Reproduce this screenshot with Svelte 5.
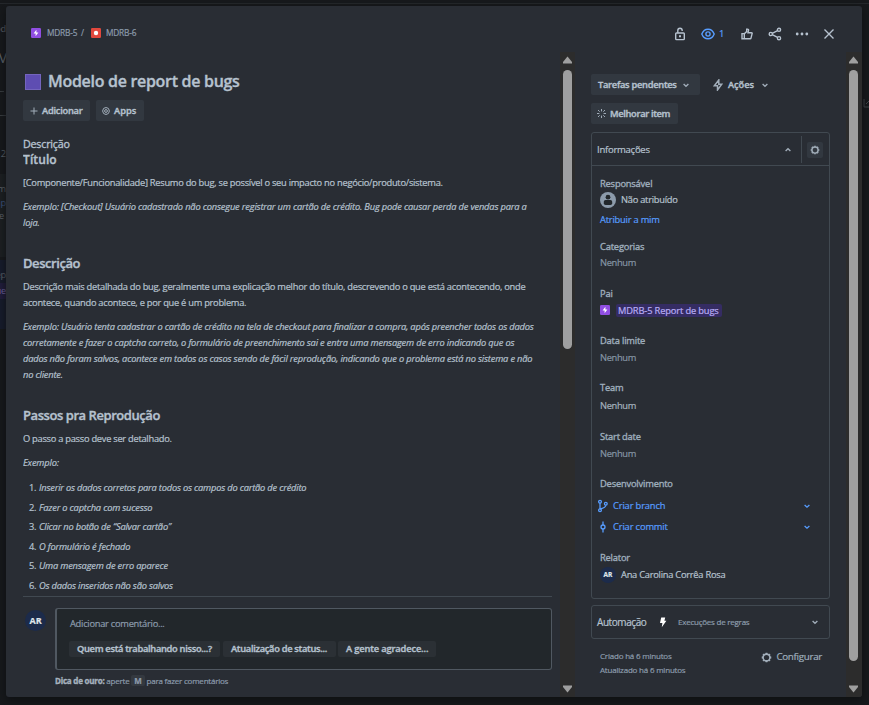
<script>
  const steps = [
    'Inserir os dados corretos para todos os campos do cartão de crédito',
    'Fazer o captcha com sucesso',
    'Clicar no botão de “Salvar cartão”',
    'O formulário é fechado',
    'Uma mensagem de erro aparece',
    'Os dados inseridos não são salvos'
  ];
  const replies = ['Quem está trabalhando nisso...?', 'Atualização de status...', 'A gente agradece...'];
</script>

{#snippet chevron(up = false)}
  <svg class="chev" class:up width="8" height="8" viewBox="0 0 8 8"><path d="M1.6 3 4 5.2 6.4 3" /></svg>
{/snippet}
{#snippet epic()}
  <svg width="10" height="10" viewBox="0 0 10 10"><rect width="10" height="10" rx="1.3" fill="#904ee2" /><path d="M5.4 1.8 2.6 5.4h2v2.8l2.8-3.6h-2z" fill="#fff" /></svg>
{/snippet}
{#snippet gear(size = 12)}
  <svg class="gear" width={size} height={size} viewBox="0 0 12 12"><circle cx="6" cy="6" r="3.7" stroke-width="1.7" /><path stroke-width="2" d="M6 .8v1.4M6 9.8v1.4M.8 6h1.4M9.8 6h1.4M2.3 2.3l1 1M8.7 8.7l1 1M9.7 2.3l-1 1M3.3 8.7l-1 1" /></svg>
{/snippet}
{#snippet scrollbar(kind)}
  <div class="scrollbar {kind}">
    <svg width="9" height="8" viewBox="0 0 9 8"><path d="M4.5 .5 9 6v1.5H0V6z" /></svg>
    <div class="thumb"></div>
    <svg class="down" width="9" height="8" viewBox="0 0 9 8"><path d="M4.5 7.5 9 2V.5H0V2z" /></svg>
  </div>
{/snippet}

<div class="page">
  <div class="board left-edge">
    <span class="b1">od</span><span class="b2">V</span><i class="r1"></i><i class="r2"></i>
    <span class="b3">o 2</span><i class="card"></i><span class="b4">rm</span><span class="b5">mp</span><span class="b6">e</span>
    <i class="sel"></i><span class="b7">ep</span><span class="b8">ue</span>
  </div>
  <div class="board right-edge"><svg width="8" height="10" viewBox="0 0 8 10"><path d="M1 1v8h7M3 6l4-4" /></svg></div>

  <section class="modal">
    <header>
      <nav>{@render epic()}<span class="k1">MDRB-5</span><span class="slash">/</span>
        <svg width="10" height="10" viewBox="0 0 10 10"><rect width="10" height="10" rx="1.3" fill="#e2483d" /><circle cx="5" cy="5" r="2.2" fill="#fff" /></svg>
        <span class="k2">MDRB-6</span></nav>
      <div class="tools">
        <svg class="lock" width="12" height="14" viewBox="0 0 12 14"><rect x="1.7" y="6" width="8.6" height="6.6" rx=".8" /><path d="M3.8 6V3.5a2.2 2.2 0 0 1 4.4 0V4" /><path d="M6 8.3v2" stroke-width="2" /></svg>
        <svg class="eye" width="14" height="12" viewBox="0 0 14 12"><path d="M.8 6C2 3 4.4 1.2 7 1.2S12 3 13.2 6C12 9 9.6 10.8 7 10.8S2 9 .8 6z" /><circle cx="7" cy="6" r="2.1" /></svg>
        <span class="one">1</span>
        <svg class="like" width="12" height="12" viewBox="0 0 12 12"><path d="M1 5.6h2.3v5.2H1zM3.3 5.8 5.7 3.6V1.1h.9c.8 0 1.1.7.9 1.5l-.5 2.1h3.4c.6 0 .9.5.7 1l-1.1 4.4c-.1.5-.5.7-.9.7H3.3" /></svg>
        <svg class="share" width="14" height="14" viewBox="0 0 14 14"><circle cx="2.8" cy="7" r="1.6" /><circle cx="11" cy="2.8" r="1.6" /><circle cx="11" cy="11.2" r="1.6" /><path d="m4.3 6.3 5.2-2.7M4.3 7.7l5.2 2.7" /></svg>
        <svg class="dots" width="14" height="4" viewBox="0 0 14 4"><circle cx="2.2" cy="2" r="1.4" /><circle cx="7" cy="2" r="1.4" /><circle cx="11.8" cy="2" r="1.4" /></svg>
        <svg class="close" width="12" height="12" viewBox="0 0 12 12"><path d="m1.5 1.5 9 9m0-9-9 9" /></svg>
      </div>
    </header>

    <div class="columns">
      <main>
        <div class="content">
          <h1><i class="swatch"></i><span>Modelo de report de bugs</span></h1>
          <div class="actions">
            <button class="add"><svg width="8" height="8" viewBox="0 0 8 8"><path d="M4 .5v7M.5 4h7" /></svg><span>Adicionar</span></button>
            <button class="apps"><svg width="8" height="8" viewBox="0 0 8 8"><path d="m4 .5 2.4.9L7.4 4l-1 2.5L4 7.5l-2.4-1L.6 4l1-2.6z" /><circle cx="4" cy="4" r="1.4" /></svg><span>Apps</span></button>
          </div>
          <div class="label">Descrição</div>
          <h2 class="first">Título</h2>
          <p>[Componente/Funcionalidade] Resumo do bug, se possível o seu impacto no negócio/produto/sistema.</p>
          <p class="em">Exemplo: [Checkout] Usuário cadastrado não consegue registrar um cartão de crédito. Bug pode causar perda de vendas para a<br />loja.</p>
          <h2>Descrição</h2>
          <p>Descrição mais detalhada do bug, geralmente uma explicação melhor do título, descrevendo o que está acontecendo, onde<br />acontece, quando acontece, e por que é um problema.</p>
          <p class="em">Exemplo: Usuário tenta cadastrar o cartão de crédito na tela de checkout para finalizar a compra, após preencher todos os dados<br />corretamente e fazer o captcha correto, o formulário de preenchimento sai e entra uma mensagem de erro indicando que os<br />dados não foram salvos, acontece em todos os casos sendo de fácil reprodução, indicando que o problema está no sistema e não<br />no cliente.</p>
          <h2>Passos pra Reprodução</h2>
          <p>O passo a passo deve ser detalhado.</p>
          <p class="em">Exemplo:</p>
          <ol>
            {#each steps as step, i}<li><b>{i + 1}.</b><span>{step}</span></li>{/each}
          </ol>
        </div>
        <div class="comment">
          <div class="avatar big">AR</div>
          <div class="editor">
            <div class="box">
              <div class="ph">Adicionar comentário...</div>
              <div class="replies">{#each replies as r, i}<button class="r{i}">{r}</button>{/each}</div>
            </div>
            <div class="tip"><strong>Dica de ouro:</strong> <span>aperte</span> <kbd>M</kbd> <span>para fazer comentários</span></div>
          </div>
        </div>
      </main>
      {@render scrollbar('short')}

      <aside>
        <div class="status">
          <button class="todo"><span>Tarefas pendentes</span>{@render chevron()}</button>
          <button class="act"><svg width="10" height="12" viewBox="0 0 10 12"><path d="M5.8 1 1.3 6.8h3.2V11l4.3-5.8H5.8z" /></svg><span>Ações</span>{@render chevron()}</button>
        </div>
        <button class="improve"><svg width="9" height="9" viewBox="0 0 9 9"><path d="M4.5 0v2.4M4.5 6.6V9M0 4.5h2.4M6.6 4.5H9M1 1l1.7 1.7M6.3 6.3 8 8M8 1 6.3 2.7M2.7 6.3 1 8" /></svg><span>Melhorar item</span></button>

        <div class="panel">
          <div class="head"><span>Informações</span>{@render chevron(true)}<div class="cfg"><button>{@render gear(10)}</button></div></div>
          <div class="fields">
            <div class="name">Responsável</div>
            <div class="user"><svg width="16" height="16" viewBox="0 0 16 16"><circle cx="8" cy="8" r="8" fill="#8c9bab" /><circle cx="8" cy="5.2" r="2.4" fill="#22272b" /><rect x="3.8" y="8" width="8.4" height="5" rx="1.7" fill="#22272b" /></svg><span>Não atribuído</span></div>
            <div class="assign">Atribuir a mim</div>
            <div class="name cat">Categorias</div>
            <div class="none">Nenhum</div>
            <div class="name pai">Pai</div>
            <div class="parent">{@render epic()}<span>MDRB-5 Report de bugs</span></div>
            <div class="name due">Data limite</div>
            <div class="none n2">Nenhum</div>
            <div class="name team">Team</div>
            <div class="none light">Nenhum</div>
            <div class="name start">Start date</div>
            <div class="none n2">Nenhum</div>
            <div class="name dev">Desenvolvimento</div>
            <div class="git branch"><svg width="12" height="14" viewBox="0 0 12 14"><circle cx="3" cy="2.7" r="1.4" /><circle cx="3" cy="11.3" r="1.4" /><circle cx="8.8" cy="4.8" r="1.4" /><path d="M3 4.1v5.8M8.8 6.2C8.8 8.3 7 9 3 10" /></svg><span>Criar branch</span>{@render chevron()}</div>
            <div class="git"><svg width="12" height="14" viewBox="0 0 12 14"><circle cx="6" cy="7" r="2" /><path d="M6 1.5V5M6 9v3.5" /></svg><span>Criar commit</span>{@render chevron()}</div>
            <div class="name rel">Relator</div>
            <div class="user who"><div class="avatar">AR</div><span>Ana Carolina Corrêa Rosa</span></div>
          </div>
        </div>

        <div class="panel auto"><span class="at">Automação</span><svg width="8" height="11" viewBox="0 0 8 11"><path d="M2.2.5h4L5.4 3.8h2L2.8 10.3 3.4 6H1z" fill="#fff" /></svg><span class="runs">Execuções de regras</span>{@render chevron()}</div>
        <div class="foot"><div class="dates"><div>Criado há 6 minutos</div><div>Atualizado há 6 minutos</div></div><div class="conf">{@render gear(11)}<span>Configurar</span></div></div>
      </aside>
      {@render scrollbar('long')}
    </div>
  </section>
</div>

<style>
  :global(body) { background: #17191c; }
  * { box-sizing: border-box; }
  .page { position: relative; width: 869px; height: 705px; padding: 6px 0 0 6px; overflow: hidden; background: #17191c; box-shadow: inset 0 3px #17191c, inset 0 4px #25282c; font-family: 'Open Sans', 'Noto Sans', sans-serif; font-size: 9.3px; line-height: 16px; letter-spacing: -.2px; color: #b6c2cf; white-space: nowrap; -webkit-text-stroke: .2px; }
  .modal { position: relative; width: 856px; height: 691px; background: #292d34; border-radius: 3px; overflow: hidden; box-shadow: 0 3px 8px #0e1012; display: flex; flex-direction: column; }
  .board { position: absolute; top: 0; height: 705px; width: 6px; overflow: hidden; color: #60666d; -webkit-text-stroke: 0; }
  .left-edge { left: 0; }
  .left-edge span, .left-edge i { position: absolute; right: 0; }
  .left-edge i { width: 6px; height: 1px; background: #3a3e42; }
  .b1 { top: 21px; } .left-edge .b2 { top: 48px; font-size: 14px; right: -1px; line-height: 20px; }
  .left-edge .r1 { top: 91px; } .left-edge .r2 { top: 115px; }
  .b3 { top: 146px; } .b4 { top: 181px; } .b5 { top: 195px; color: #405784; } .left-edge .b6 { top: 208px; right: 2px; }
  .left-edge .card { top: 174px; height: 83px; background: #1d2023; }
  .left-edge .sel { top: 260px; height: 69px; background: #171c2d; }
  .b7 { top: 267px; } .b8 { top: 283px; color: #7769a9; background: #211d3d; }
  .right-edge { right: 0; }
  .right-edge svg { position: absolute; top: 98px; fill: none; stroke: #44484d; }

  header { height: 46px; flex: none; display: flex; justify-content: space-between; align-items: center; padding: 9px 27px 0 25px; }
  nav { display: flex; align-items: center; color: #8c9bab; font-size: 8.3px; margin-top: -1px; }
  .k1 { width: 34px; margin-left: 6px; } .slash { width: 10px; } .k2 { margin-left: 5px; }
  .tools { display: flex; align-items: center; }
  svg { flex: none; display: block; }
  .tools svg { fill: none; stroke: #b6c2cf; stroke-width: 1.4; }
  .tools .eye { stroke: #579dff; margin-left: 15px; }
  .one { color: #579dff; margin-left: 4px; width: 7px; }
  .tools .like { margin-left: 15px; } .tools .share { margin-left: 15px; } .tools .dots { margin-left: 13px; fill: #b6c2cf; stroke: none; } .tools .close { margin-left: 14px; }

  .columns { display: flex; height: 645px; }
  main { width: 554px; padding-left: 17px; }
  .scrollbar { width: 15px; height: 645px; background: #2c2c2c; display: flex; flex-direction: column; align-items: center; padding: 4px 0; }
  .scrollbar svg { fill: #9f9f9f; }
  .down { margin-top: auto; }
  .thumb { width: 9px; margin-top: 6px; border-radius: 5px; background: #9f9f9f; }
  .short .thumb { height: 279px; } .long .thumb { height: 591px; } .scrollbar.long { width: 16px; padding-right: 1px; }
  .content { width: 529px; height: 545px; border-bottom: 1px solid #414951; overflow: hidden; }
  h1, h2, p, ol { margin: 0; padding: 0; }
  h1, h2, button, strong { -webkit-text-stroke: .35px; }
  h1 { margin-top: 17px; height: 24px; display: flex; align-items: center; font-size: 16px; font-weight: 600; line-height: 24px; letter-spacing: -.3px; }
  h1 span { margin-top: -1px; }
  .swatch { width: 16px; height: 16px; margin: 2px 7px 0 2px; background: #5e4db2; border: 1px solid #7465bd; }
  button { font: inherit; font-weight: 600; letter-spacing: -.2px; text-align: left; color: #b6c2cf; background: #323840; border: 0; border-radius: 2px; padding: 0; display: flex; align-items: center; }
  button svg { fill: none; stroke: #a1adb9; }
  .actions { display: flex; gap: 6px; margin-top: 7px; }
  .actions button { height: 21px; }
  .add { width: 67px; padding-left: 7px; } .add span { margin-left: 4px; letter-spacing: -.25px; }
  .apps { width: 48px; padding-left: 6px; letter-spacing: 0; } .apps span { margin-left: 4px; }
  .label { margin-top: 15px; height: 16px; font-size: 10.7px; -webkit-text-stroke: .35px; }
  h2 { font-size: 13px; font-weight: 600; line-height: 18px; margin: 23px 0 7px; letter-spacing: -.44px; }
  h2.first { font-size: 12px; margin: -1px 0 6px; letter-spacing: .1px; }
  p { margin-bottom: 8px; letter-spacing: -.267px; }
  .em { font-style: italic; letter-spacing: -.178px; }
  ol { list-style: none; padding-top: 1px; }
  li { display: flex; height: 19.6px; letter-spacing: -.2px; font-style: italic; }
  li b { font-style: normal; font-weight: 400; margin-left: 6px; width: 10px; }

  .avatar { width: 16px; height: 16px; border-radius: 50%; background: #1c2b4b; color: #dee4ea; font-size: 6.5px; font-weight: 700; text-align: center; letter-spacing: 0; }
  .big { width: 21px; height: 21px; line-height: 21px; font-size: 9px; margin: 2px 9px 0 2px; flex: none; }
  .comment { display: flex; margin-top: 11px; }
  .box { width: 497px; height: 62px; border: 1px solid #505861; border-left-width: 2px; border-radius: 3px; background: #22272b; padding: 7px 0 0 12px; }
  .ph { color: #8c9bab; padding-left: 1px; letter-spacing: -.26px; }
  .replies { display: flex; margin-top: 9px; }
  .replies button { height: 16px; padding-left: 8px; background: #2b3035; letter-spacing: -.3px; }
  .replies .r2 { letter-spacing: -.15px; }
  .r0 { width: 151px; margin-right: 3px; } .r1 { width: 113px; margin-right: 2px; } .r2 { width: 98px; }
  .tip { font-size: 8px; line-height: 12px; margin-top: 5px; color: #8c9bab; letter-spacing: -.22px; }
  strong { color: #a6b2be; } kbd { font: inherit; font-weight: 700; background: #343940; padding: 0 3px; border-radius: 2px; }

  aside { width: 271px; padding: 22px 0 0 16px; }
  .status { display: flex; }
  .status button, .improve { height: 21px; }
  .chev { fill: none; stroke: #a1adb9; stroke-width: 1.4; } .up { transform: rotate(180deg); }
  .todo { width: 109px; padding-left: 7px; } .todo span { width: 84px; letter-spacing: -.28px; }
  .act { background: none; margin-left: 13px; } .act span { margin-left: 5px; width: 33px; letter-spacing: -.1px; } .act > svg:first-child { stroke-width: 1.5; }
  .improve { width: 87px; padding-left: 6px; margin: 8px 0; letter-spacing: -.33px; } .improve span { margin-left: 4px; }
  .panel { width: 239px; height: 467px; border: 1px solid #414951; border-radius: 3px; }
  .head { height: 33px; border-bottom: 1px solid #414951; display: flex; align-items: center; padding: 1px 0 0 5px; font-size: 9.5px; letter-spacing: -.25px; }
  .head > span { width: 187px; }
  .cfg { margin-left: 9px; height: 27px; border-left: 1px solid #414951; display: flex; align-items: center; padding-left: 5px; }
  .cfg button { width: 16px; height: 16px; justify-content: center; }
  .gear { fill: none; stroke: #a1adb9; }
  .fields { padding: 10px 0 0 8px; }
  .name { height: 16px; color: #9fadbc; letter-spacing: -.17px; -webkit-text-stroke: .35px; }
  .user { display: flex; height: 16px; } .user span { margin-left: 5px; letter-spacing: -.25px; }
  .assign { color: #579dff; margin-top: 4px; height: 16px; }
  .none { color: #8595a5; letter-spacing: -.33px; } .light { color: #a5b2bf; margin-top: 2px; } .n2 { margin-top: 1px; }
  .cat { margin-top: 11px; } .pai { margin-top: 15px; } .due { margin-top: 15px; } .team { margin-top: 14px; } .start { margin-top: 15px; } .dev { margin-top: 14px; }
  .parent { height: 16px; display: flex; align-items: center; } .parent span { margin-left: 6px; padding: 0 3px 0 2px; height: 13px; line-height: 13px; border-radius: 2px; background: #352c63; color: #b8acf6; letter-spacing: -.14px; }
  .git { height: 21px; display: flex; align-items: center; color: #579dff; margin-left: -3px; letter-spacing: -.13px; } .git svg { fill: none; stroke: #579dff; stroke-width: 1.3; } .git span { margin-left: 4px; width: 190px; }
  .branch { margin-top: 3px; }
  .rel { margin-top: 13px; } .who { margin-top: 1px; }
  .auto { height: 34px; margin-top: 6px; display: flex; align-items: center; padding-left: 5px; } .at { width: 62px; font-size: 10px; letter-spacing: -.43px; } .runs { margin-left: 11px; width: 133px; font-size: 8px; color: #8c9bab; letter-spacing: -.24px; }
  .foot { display: flex; justify-content: space-between; width: 231px; padding: 10px 0 0 9px; } .dates { font-size: 8px; line-height: 14px; color: #8c9bab; } .conf { display: flex; height: 16px; align-items: center; color: #9fadbc; } .conf span { margin-left: 4px; font-size: 9.8px; letter-spacing: -.3px; }
</style>
